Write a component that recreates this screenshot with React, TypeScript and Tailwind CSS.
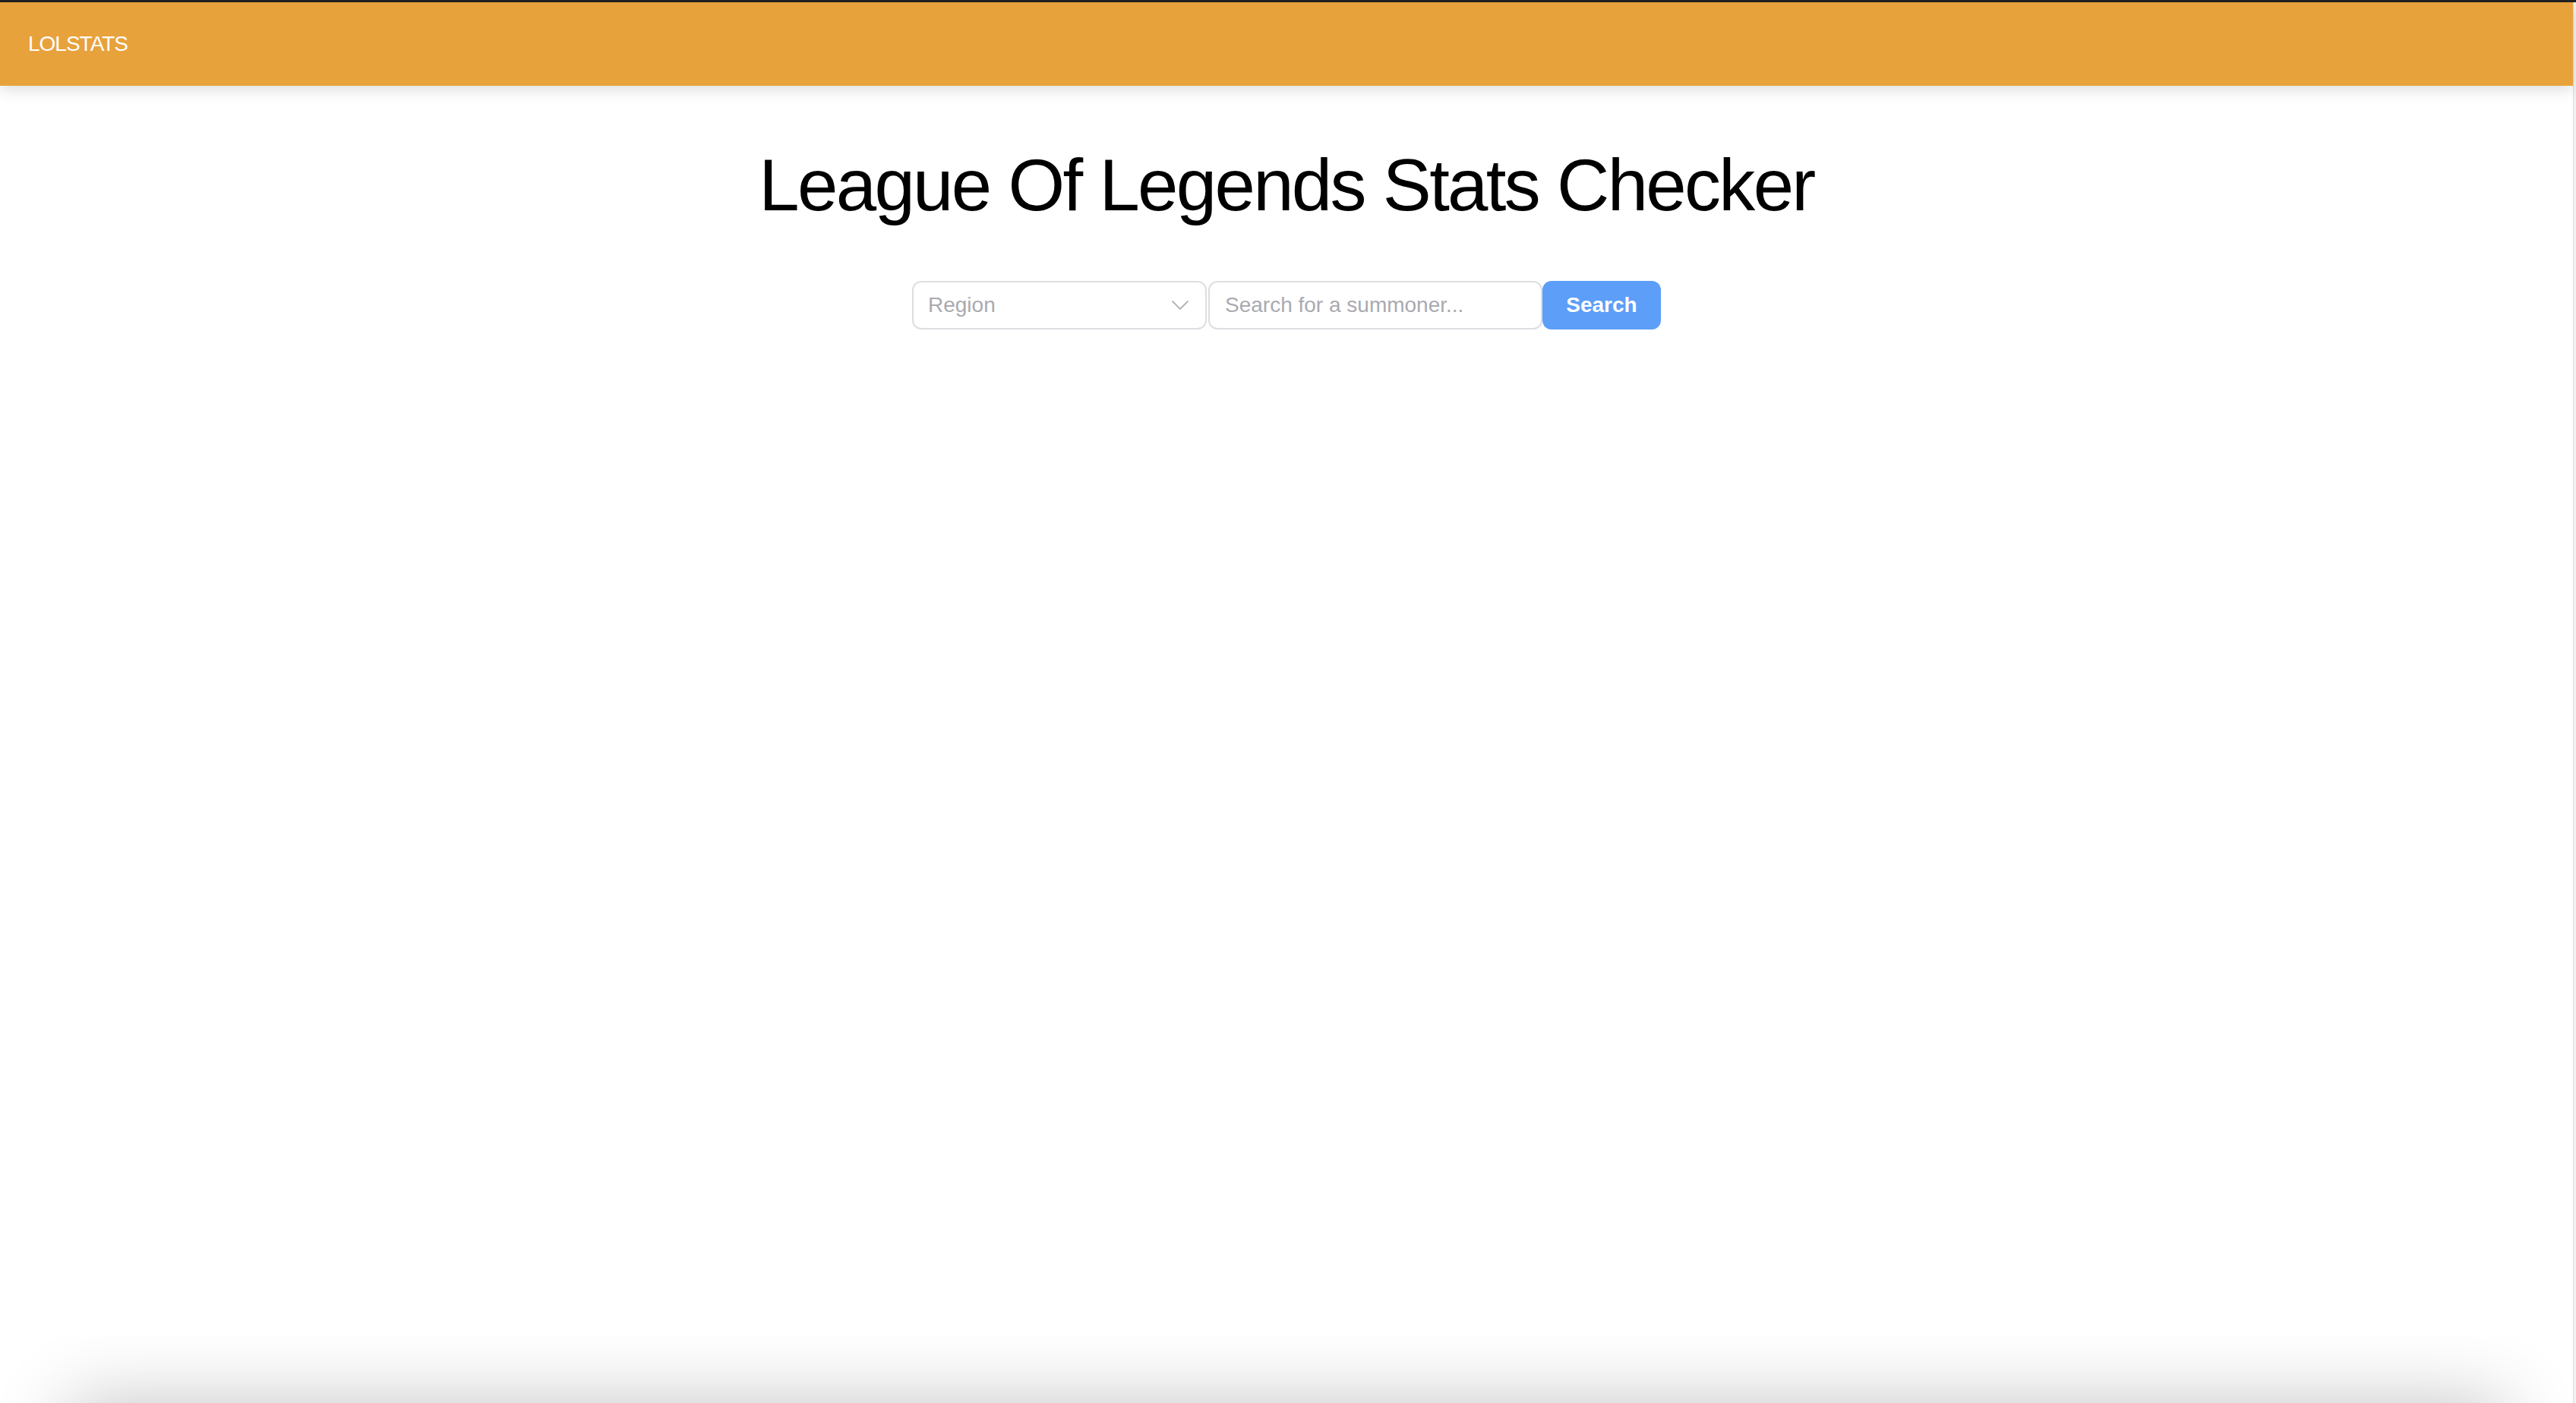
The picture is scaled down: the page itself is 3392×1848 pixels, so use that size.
import { ChevronDown } from "lucide-react";

function Header() {
  return (
    <header className="h-[110px] shrink-0 bg-[#e8a23c] flex items-center pl-[37px] shadow-[0_6px_18px_rgba(0,0,0,0.13)] relative z-10">
      <span className="text-white text-[28px] tracking-[-1px] font-['Liberation_Sans',sans-serif]">
        LOLSTATS
      </span>
    </header>
  );
}

function SearchBar() {
  return (
    <div className="flex items-center h-[64px] font-['Liberation_Sans',sans-serif] text-[28px]">
      <div className="w-[388px] h-full border-2 border-[#dedee2] rounded-[12px] bg-white flex items-center justify-between pl-[19px] pr-[13px]">
        <span className="text-[#aaaab0]">Region</span>
        <ChevronDown size={40} strokeWidth={1.1} className="text-[#b4b4b8]" />
      </div>
      <div className="ml-[2px] w-[440px] h-full border-2 border-[#dedee2] rounded-[12px] bg-white flex items-center pl-[20px]">
        <input
          className="w-full outline-none bg-transparent placeholder:text-[#aaaab0]"
          placeholder="Search for a summoner..."
        />
      </div>
      <button className="w-[156px] h-full rounded-[12px] bg-[#5c9ef8] text-white font-semibold">
        Search
      </button>
    </div>
  );
}

export default function App() {
  return (
    <div className="h-[1848px] w-full flex flex-col bg-white overflow-hidden">
      <div className="h-[3px] shrink-0 bg-[#222222]" />
      <div className="flex-1 min-h-0 flex">
        <main className="flex-1 flex flex-col">
          <Header />
          <section className="flex-1 flex flex-col items-center">
            <h1 className="mt-[83px] text-[96px] leading-none tracking-[-2.7px] text-black font-['Liberation_Sans',sans-serif]">
              League Of Legends Stats Checker
            </h1>
            <div className="mt-[78px]">
              <SearchBar />
            </div>
          </section>
          <div className="h-[88px] shrink-0 overflow-hidden">
            <div className="mx-[90px] mt-[88px] h-[200px] shadow-[0_0_100px_0_rgba(0,0,0,0.24)]" />
          </div>
        </main>
        <div className="w-[4px] shrink-0 bg-[#f2f2f2] border-l border-[#dcdcdc]" />
      </div>
    </div>
  );
}
